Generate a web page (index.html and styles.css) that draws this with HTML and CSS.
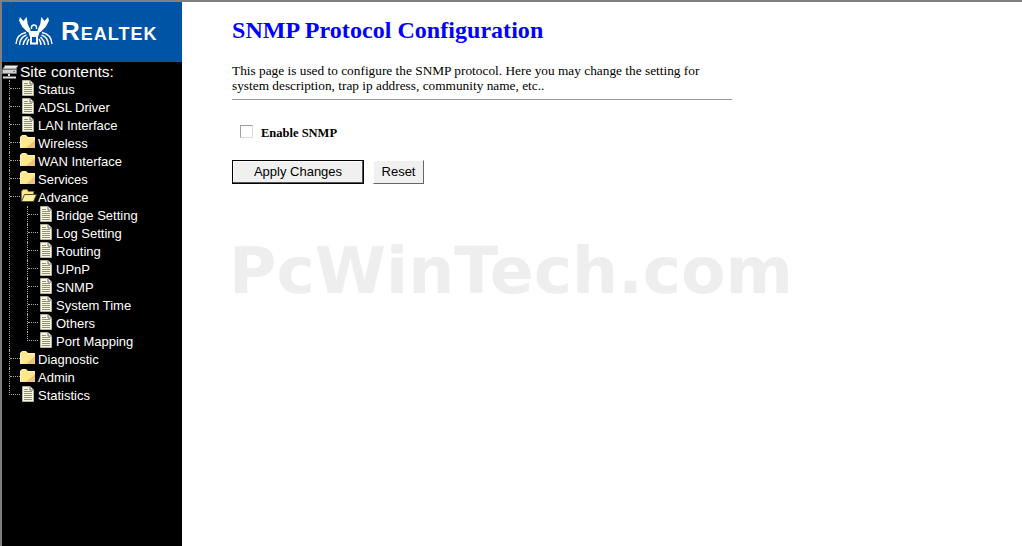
FILE: index.html
```html
<!DOCTYPE html>
<html lang="en">
<head>
    <meta charset="UTF-8">
    <title>SNMP Protocol Configuration</title>
    <link rel="stylesheet" href="styles.css">
</head>
<body>
    <svg class="sprites" width="0" height="0">
        <symbol id="page" viewBox="0 0 12 16">
            <path d="M.5.5H8L11.500 4V15.500H.5Z" fill="#fbf8d8" stroke="#b0b0a4"/>
            <path d="M8 .5V4H11.500" fill="#fff" stroke="#666"/>
            <path d="M2 3.500H6M2 5.500H10M2 7.500H10M2 9.500H10M2 11.500H10M2 13.500H10" stroke="#8d8d80"/>
        </symbol>
        <symbol id="folder" viewBox="0 0 15 13">
            <path d="M0 2L2 0H6L8 2H15V13H0Z" fill="#ffe88c"/>
            <path d="M.5 12.500V2.500L2.500.5H5.500L7.500 2.500H14.500" fill="none" stroke="#fff4b8"/>
            <path d="M6 13L15 5V13Z" fill="#edc27c"/>
        </symbol>
        <symbol id="folder-open" viewBox="0 0 17 13">
            <path d="M1.500 11.500V2.500L3 .5H7L8.500 2.500H13.500V5" fill="#ffe88c" stroke="#8a7430"/>
            <path d="M1.500 12.500L4.500 5.500H16.500L13.500 12.500Z" fill="#fff0a8" stroke="#5a4c20"/>
        </symbol>
        <symbol id="crab-side" viewBox="0 0 38 31">
            <path d="M5 0L8.300 4L11.700 0L12.700 7L15.700 13.500L12.300 15L7 9.500L4 3.500Z" fill="#fff"/>
            <path d="M11 15.500C5.500 16.500 1.500 20 1 27M11.500 18C8 19 5 22 4.500 28M12.500 20C10.500 22 8.500 24 8 28M14 22C13 23.500 12 25 12 28" fill="none" stroke="#fff" stroke-width="1.400"/>
        </symbol>
    </svg>

    <aside class="sidebar">
        <div class="brand">
            <svg class="brand-mark" viewBox="0 0 38 31">
                <use href="#crab-side"/>
                <use href="#crab-side" transform="matrix(-1 0 0 1 38 0)"/>
                <path d="M13 14H25L23 20H15Z" fill="#fff"/>
                <path d="M16.500 12V10.500A2.500 2.500 0 0 1 21.500 10.500V12" fill="none" stroke="#fff" stroke-width="1.400"/>
                <path d="M16 20V26.500H19M22 20V26.500H19" fill="none" stroke="#fff" stroke-width="2"/>
            </svg>
            <span class="brand-name">Realtek</span>
        </div>

        <nav class="tree">
            <div class="tree-root">
                <svg class="server" viewBox="0 0 17 14">
                    <path d="M3 .5H16L14 4H1Z" fill="#e8e8e8" stroke="#777"/>
                    <path d="M.5 4.500H14.500V8.500H.5Z" fill="#cfcfcf" stroke="#777"/>
                    <path d="M11 6.500H13" stroke="#3a3"/>
                    <path d="M7 9V11M1 12.500H14" stroke="#ddd" stroke-width="2"/>
                </svg>
                Site contents:
            </div>
            <ul class="tree-list">
                <li><div class="node"><i class="elbow"></i><svg class="icon-page"><use href="#page"/></svg>Status</div></li>
                <li><div class="node"><i class="elbow"></i><svg class="icon-page"><use href="#page"/></svg>ADSL Driver</div></li>
                <li><div class="node"><i class="elbow"></i><svg class="icon-page"><use href="#page"/></svg>LAN Interface</div></li>
                <li><div class="node"><i class="elbow"></i><svg class="icon-folder"><use href="#folder"/></svg>Wireless</div></li>
                <li><div class="node"><i class="elbow"></i><svg class="icon-folder"><use href="#folder"/></svg>WAN Interface</div></li>
                <li><div class="node"><i class="elbow"></i><svg class="icon-folder"><use href="#folder"/></svg>Services</div></li>
                <li>
                    <div class="node"><i class="elbow"></i><svg class="icon-open"><use href="#folder-open"/></svg>Advance</div>
                    <ul class="tree-list nested">
                        <li><div class="node"><i class="elbow"></i><svg class="icon-page"><use href="#page"/></svg>Bridge Setting</div></li>
                        <li><div class="node"><i class="elbow"></i><svg class="icon-page"><use href="#page"/></svg>Log Setting</div></li>
                        <li><div class="node"><i class="elbow"></i><svg class="icon-page"><use href="#page"/></svg>Routing</div></li>
                        <li><div class="node"><i class="elbow"></i><svg class="icon-page"><use href="#page"/></svg>UPnP</div></li>
                        <li><div class="node"><i class="elbow"></i><svg class="icon-page"><use href="#page"/></svg>SNMP</div></li>
                        <li><div class="node"><i class="elbow"></i><svg class="icon-page"><use href="#page"/></svg>System Time</div></li>
                        <li><div class="node"><i class="elbow"></i><svg class="icon-page"><use href="#page"/></svg>Others</div></li>
                        <li><div class="node"><i class="elbow"></i><svg class="icon-page"><use href="#page"/></svg>Port Mapping</div></li>
                    </ul>
                </li>
                <li><div class="node"><i class="elbow"></i><svg class="icon-folder"><use href="#folder"/></svg>Diagnostic</div></li>
                <li><div class="node"><i class="elbow"></i><svg class="icon-folder"><use href="#folder"/></svg>Admin</div></li>
                <li><div class="node"><i class="elbow"></i><svg class="icon-page"><use href="#page"/></svg>Statistics</div></li>
            </ul>
        </nav>
    </aside>

    <main class="content">
        <h1>SNMP Protocol Configuration</h1>
        <p class="intro">This page is used to configure the SNMP protocol. Here you may change the setting for system description, trap ip address, community name, etc..</p>
        <hr class="rule">
        <form class="snmp-form">
            <label class="enable-row">
                <input type="checkbox" class="check">
                <span>Enable SNMP</span>
            </label>
            <div class="actions">
                <button type="submit" class="btn btn-default">Apply Changes</button>
                <button type="reset" class="btn btn-reset">Reset</button>
            </div>
        </form>
    </main>

    <div class="watermark">PcWinTech.com</div>
</body>
</html>
```

FILE: styles.css
```css
html, body {
    height: 100%;
}
body {
    margin: 0;
    display: flex;
    overflow: hidden;
    background: #fff;
    border-top: 2px solid #808080;
    border-left: 2px solid #808080;
    box-sizing: border-box;
    font-family: "Liberation Serif", serif;
}
.sprites {
    position: absolute;
}

/* left frame */
.sidebar {
    width: 180px;
    flex: none;
    background: #000;
    color: #fff;
    font-family: "Liberation Sans", Arial, sans-serif;
}
.brand {
    height: 60px;
    background: #0054a6;
    display: flex;
    align-items: center;
    padding-left: 13px;
    gap: 8px;
    box-sizing: border-box;
}
.brand-mark {
    width: 38px;
    height: 31px;
}
.brand-name {
    font-size: 26px;
    font-weight: bold;
    font-variant: small-caps;
    letter-spacing: 1px;
    padding-bottom: 2px;
    color: #fff;
}
.tree {
    padding-top: 1px;
}
.tree-root {
    height: 17px;
    display: flex;
    align-items: center;
    font-size: 15.5px;
    gap: 1px;
}
.server {
    width: 17px;
    height: 14px;
    flex: none;
}
.tree-list {
    list-style: none;
    margin: 0 0 0 7px;
    padding: 0;
    font-size: 13px;
}
.tree-list.nested {
    margin-left: 17px;
}
.tree-list > li {
    border-left: 1px dotted #aaa;
}
.tree-list > li:last-child {
    border-left: none;
}
.node {
    height: 18px;
    display: flex;
    align-items: center;
    white-space: nowrap;
}
.elbow {
    width: 10px;
    height: 9px;
    flex: none;
    align-self: flex-start;
    border-bottom: 1px dotted #aaa;
    box-sizing: border-box;
}
.tree-list > li:last-child > .node > .elbow {
    border-left: 1px dotted #aaa;
    width: 11px;
}
.node svg {
    flex: none;
    margin-top: -3px;
    margin-right: 4px;
}
.node .icon-page {
    width: 12px;
    height: 16px;
    margin-left: 2px;
}
.node .icon-folder {
    width: 15px;
    height: 13px;
    margin-right: 3px;
}
.node .icon-open {
    width: 17px;
    height: 13px;
    margin-right: 1px;
}

/* right frame */
.content {
    flex: 1;
    padding: 15px 0 0 50px;
}
h1 {
    margin: 0;
    font-size: 24px;
    line-height: 27px;
    letter-spacing: 0.04px;
    color: #0000ff;
}
.intro {
    width: 500px;
    margin: 19px 0 0;
    font-size: 13.33px;
    line-height: 15px;
    color: #000;
}
.rule {
    width: 500px;
    margin: 6px 0 0;
    height: 1px;
    border: none;
    background: #999;
}
.enable-row {
    display: flex;
    align-items: center;
    margin: 26px 0 0 8px;
    height: 14px;
    font-size: 12.5px;
    font-weight: bold;
}
.check {
    appearance: none;
    width: 13px;
    height: 13px;
    margin: -4px 8px 0 0;
    background: #fff;
    border: 1px solid #a0a0a0;
    border-right-color: #dcdcdc;
    border-bottom-color: #dcdcdc;
}
.actions {
    display: flex;
    gap: 9px;
    margin-top: 20px;
}
.btn {
    height: 24px;
    padding: 0 0 2px;
    background: #f0f0f0;
    font-family: "Liberation Sans", Arial, sans-serif;
    font-size: 13px;
    color: #000;
    box-sizing: border-box;
}
.btn-default {
    width: 132px;
    border: 1px solid #000;
    box-shadow: inset -1px -1px 0 #555, inset 1px 1px 0 #fff;
}
.btn-reset {
    width: 51px;
    border: 1px solid;
    border-color: #fff #666 #666 #fff;
}

.watermark {
    position: absolute;
    left: 229px;
    top: 233px;
    font-family: "DejaVu Sans", sans-serif;
    font-weight: bold;
    font-size: 64.7px;
    color: #eeeeee;
    white-space: nowrap;
    pointer-events: none;
}
```
